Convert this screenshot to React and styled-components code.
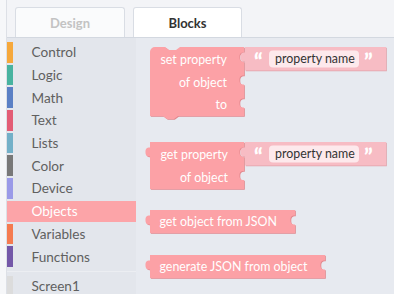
import React from "react";
import styled, { createGlobalStyle } from "styled-components";

const GlobalStyle = createGlobalStyle`
  html, body { margin: 0; padding: 0; background: #f6f7f9; }
  body { font-family: Lato, "Noto Sans", sans-serif; }
`;

const Page = styled.div`
  width: 394px;
  height: 294px;
  overflow: hidden;
  background: #f6f7f9;
`;

const Frame = styled.div`
  margin-left: 6px;
  height: 100%;
  border-left: 1px solid #dde0e6;
  display: flex;
  flex-direction: column;
  background: #f3f4f7;
`;

const TabBar = styled.div`
  height: 37px;
  flex: none;
  display: flex;
  align-items: flex-end;
  gap: 8px;
  padding-left: 8px;
  border-bottom: 1px solid #d3d8e0;
`;

const Tab = styled.div`
  width: ${(p) => p.$w}px;
  height: 30px;
  box-sizing: border-box;
  border: 1px solid #d9dde4;
  border-bottom: none;
  border-radius: 3px 3px 0 0;
  background: ${(p) => (p.$active ? "#ffffff" : "#fafbfc")};
  color: ${(p) => (p.$active ? "#333333" : "#c3c3c3")};
  font-family: Lato, "Noto Sans", sans-serif;
  font-weight: 700;
  font-size: 13px;
  display: flex;
  align-items: center;
  justify-content: center;
  padding-top: 1px;
`;

const Main = styled.div`
  flex: 1;
  display: flex;
  min-height: 0;
`;

const Toolbox = styled.div`
  width: 129px;
  flex: none;
  background: #e3e6ec;
  padding-top: 4px;
  display: flex;
  flex-direction: column;
  gap: 2px;
`;

const Category = styled.div`
  height: 20.7px;
  flex: none;
  display: flex;
  align-items: stretch;
  background: ${(p) => (p.$selected ? "#fca4a8" : "transparent")};
`;

const ColorBar = styled.div`
  width: 6px;
  flex: none;
  background: ${(p) => p.$color};
`;

const CategoryLabel = styled.span`
  margin-left: 18.5px;
  display: flex;
  align-items: center;
  font-family: Lato, "Noto Sans", sans-serif;
  font-size: 13.6px;
  color: ${(p) => (p.$selected ? "#ffffff" : "#606060")};
`;

const Separator = styled.div`
  height: 1px;
  flex: none;
  margin: 2px 0 2px;
  background: #eceef2;
`;

const Workspace = styled.div`
  flex: 1;
  position: relative;
  background: #e7eaf0;
  overflow: hidden;
`;

const BlockSvg = styled.svg`
  position: absolute;
  left: ${(p) => p.$x - 136 - 7}px;
  top: ${(p) => p.$y - 38 - 1}px;
  overflow: visible;
`;

const BlockText = styled.text`
  font-family: Lato, "Noto Sans", sans-serif;
  font-size: 12.4px;
  fill: #ffffff;
`;

const FieldText = styled.text`
  font-family: Lato, "Noto Sans", sans-serif;
  font-size: 12.4px;
  fill: #333333;
`;

const QuoteText = styled.text`
  font-family: Lato, "Noto Sans", sans-serif;
  font-weight: 900;
  font-size: 22px;
  fill: #ffffff;
`;

const tabIn = "c -4,0 -4.5,2 -4.5,4.5 s 0.5,4.5 4.5,4.5";
const tabOut = "c -4,0 -4.5,-2 -4.5,-4.5 s 0.5,-4.5 4.5,-4.5";

function Block({ x, y, w, h, d, fill = "#fca1a6", shade = "#e2878d", children }) {
  return (
    <BlockSvg $x={x} $y={y} width={w + 14} height={h + 10}>
      <g transform="translate(7,1)">
        <path d={d} fill={shade} transform="translate(0.8,0.8)" />
        <path d={d} fill={fill} />
        {children}
      </g>
    </BlockSvg>
  );
}

function StringBlock({ x, y }) {
  const w = 141;
  const h = 23.5;
  return (
    <Block
      x={x}
      y={y}
      w={w}
      h={h}
      fill="#f7bcc4"
      shade="#e0a3ab"
      d={`M0,0 H${w} V${h} H0 V14.5 ${tabOut} Z`}
    >
      <QuoteText x={9} y={23}>“</QuoteText>
      <rect x={24} y={3.5} width={90} height={17} rx={4} fill="#fde9ec" />
      <FieldText x={30} y={16.3}>property name</FieldText>
      <QuoteText x={119} y={23}>”</QuoteText>
    </Block>
  );
}

const categories = [
  { name: "Control", color: "#f6a83b" },
  { name: "Logic", color: "#48b3a0" },
  { name: "Math", color: "#5b80c5" },
  { name: "Text", color: "#e35d75" },
  { name: "Lists", color: "#73b0c8" },
  { name: "Color", color: "#787878" },
  { name: "Device", color: "#9a9ae8" },
  { name: "Objects", color: "#fca4a8", selected: true },
  { name: "Variables", color: "#f57b50" },
  { name: "Functions", color: "#7458a8" },
];

export default function App() {
  return (
    <Page>
      <GlobalStyle />
      <Frame>
        <TabBar>
          <Tab $w={110}>Design</Tab>
          <Tab $w={109} $active>
            Blocks
          </Tab>
        </TabBar>
        <Main>
          <Toolbox>
            {categories.map((c) => (
              <Category key={c.name} $selected={c.selected}>
                <ColorBar $color={c.color} />
                <CategoryLabel $selected={c.selected}>{c.name}</CategoryLabel>
              </Category>
            ))}
            <Separator />
            <Category>
              <ColorBar $color="#dcdcdc" />
              <CategoryLabel>Screen1</CategoryLabel>
            </Category>
          </Toolbox>
          <Workspace>
            <Block
              x={150}
              y={47}
              w={94}
              h={69}
              d={`M0,5 a5,5 0 0 1 5,-5 H15 l4,3 h7 l4,-3 H94 V5.5 ${tabIn} V28.5 ${tabIn} V51.5 ${tabIn} V69 H28 l-4,3 h-7 l-4,-3 H0 Z`}
            >
              <BlockText x={77} y={17} textAnchor="end">set property</BlockText>
              <BlockText x={77} y={39.5} textAnchor="end">of object</BlockText>
              <BlockText x={77} y={61.5} textAnchor="end">to</BlockText>
            </Block>
            <StringBlock x={245} y={47} />

            <Block
              x={150}
              y={142}
              w={94}
              h={47}
              d={`M0,0 H94 V5.5 ${tabIn} V29 ${tabIn} V47 H0 V14.5 ${tabOut} Z`}
            >
              <BlockText x={78} y={16.5} textAnchor="end">get property</BlockText>
              <BlockText x={78} y={40} textAnchor="end">of object</BlockText>
            </Block>
            <StringBlock x={245} y={142} />

            <Block
              x={150}
              y={210}
              w={145}
              h={23}
              d={`M0,0 H145 V5.5 ${tabIn} V23 H0 V14.5 ${tabOut} Z`}
            >
              <BlockText x={9.5} y={16}>get object from JSON</BlockText>
            </Block>

            <Block
              x={150}
              y={255}
              w={175}
              h={23}
              d={`M0,0 H175 V5.5 ${tabIn} V23 H0 V14.5 ${tabOut} Z`}
            >
              <BlockText x={9.5} y={16}>generate JSON from object</BlockText>
            </Block>
          </Workspace>
        </Main>
      </Frame>
    </Page>
  );
}
